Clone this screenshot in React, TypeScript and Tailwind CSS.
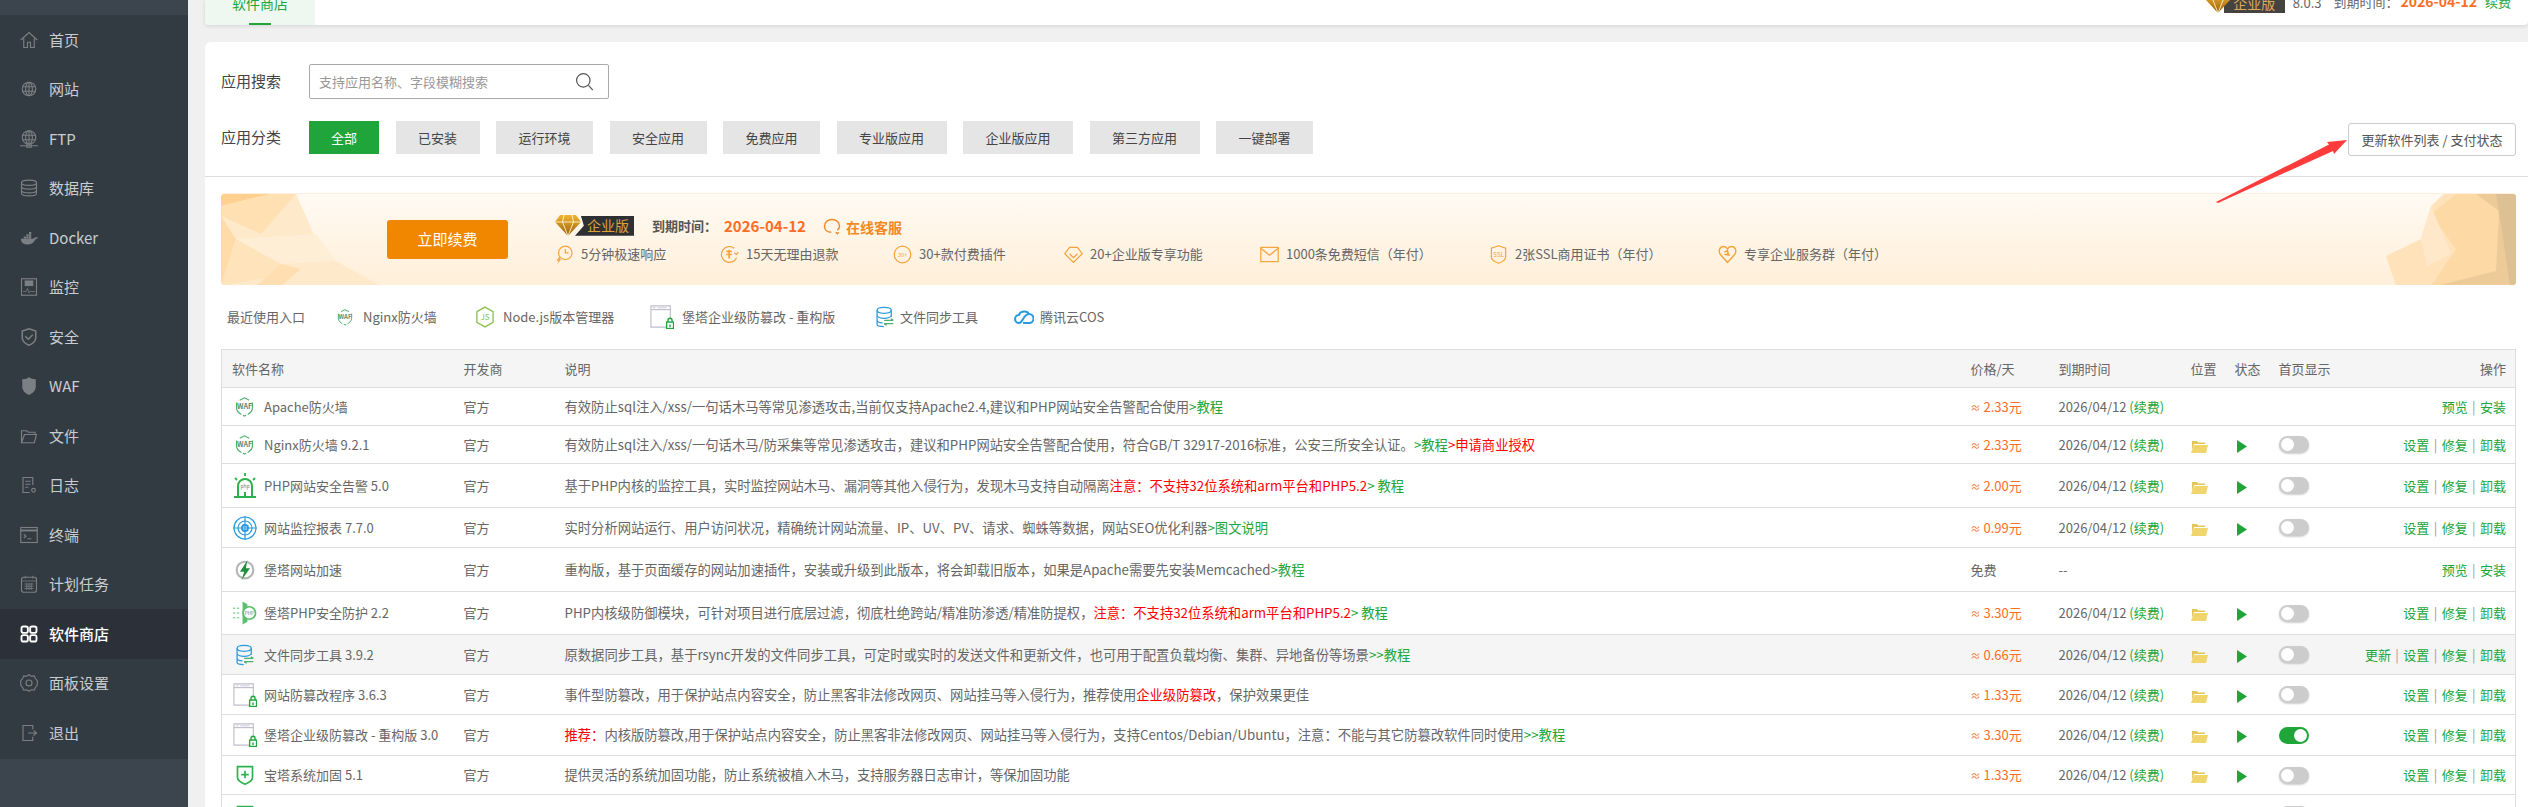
import type { ReactNode } from 'react';

const G = ({ children }: { children: ReactNode }) => <span className="text-[#20a53a]">{children}</span>;
const R = ({ children }: { children: ReactNode }) => <span className="text-[#ff0000]">{children}</span>;

function Svg({ size = 18, view = 24, children }: { size?: number; view?: number; children: ReactNode }) {
  return (
    <svg width={size} height={size} viewBox={`0 0 ${view} ${view}`} fill="none" stroke="currentColor" strokeWidth="1.5" className="shrink-0">
      {children}
    </svg>
  );
}

const Globe = () => (
  <>
    <circle cx="12" cy="10" r="9" />
    <ellipse cx="12" cy="10" rx="4.5" ry="9" />
    <path d="M3 7h18M3 13h18M12 1v18" />
  </>
);

const sideIcons: Record<string, ReactNode> = {
  home: <path d="M1 12 12 2l11 10M5 10v12h5v-7h4v7h5V10" />,
  web: (
    <g transform="translate(0 2)">
      <Globe />
    </g>
  ),
  ftp: (
    <>
      <Globe />
      <path d="M0 21h24M9 19v4h6v-4" />
    </>
  ),
  db: (
    <>
      <ellipse cx="12" cy="5" rx="10" ry="3.5" />
      <path d="M2 5v14c0 2 4.500 3.500 10 3.500s10-1.500 10-3.500V5M2 10c0 2 4.500 3.500 10 3.500s10-1.500 10-3.500M2 15c0 2 4.500 3.500 10 3.500s10-1.500 10-3.500" />
    </>
  ),
  docker: (
    <path
      fill="currentColor"
      stroke="none"
      d="M1 13h17c.6-1.500 2-2 3.500-1.700.8-.3 1.500-.3 2.500 0-.8 1.700-2 2.200-3.500 2.200C19 18 15 20.500 9 20.500 4 20.500 1.500 18 1 13zM5 10h3v2.500H5zM8.500 10h3v2.500h-3zM12 10h3v2.500h-3zM8.500 7h3v2.500h-3zM12 7h3v2.500h-3zM12 4h3v2.500h-3z"
    />
  ),
  monitor: (
    <>
      <rect x="2" y="1" width="20" height="22" />
      <rect x="7" y="4" width="10" height="6" fill="currentColor" />
      <path d="M4 18h4l2-4 2 6 2-3 1 1h5" strokeWidth="1" />
    </>
  ),
  shield: (
    <>
      <path d="M12 1 21 4v9c0 5-4 8-9 10-5-2-9-5-9-10V4z" strokeWidth="2" />
      <path d="m7 11 4 4 6-6" strokeWidth="2" />
    </>
  ),
  waf: <path fill="currentColor" stroke="none" d="M12 0c2 2 5 3 9 3v10c0 5-4 9-9 11-5-2-9-6-9-11V3c4 0 7-1 9-3z" />,
  file: <path d="M2 21V5h7l2 2h9v3M2 21h17l3-11H6L2 21z" />,
  log: (
    <>
      <path d="M17 12V2H4v20h9" />
      <path d="M7 7h7M7 11h7M7 15h4" />
      <circle cx="18" cy="19" r="2.500" />
    </>
  ),
  term: (
    <>
      <rect x="1" y="2" width="22" height="20" />
      <path d="M1 6h22" strokeWidth="2.500" />
      <path d="m5 11 3 2.500L5 16M10 17h5" />
    </>
  ),
  cron: (
    <>
      <rect x="2" y="3" width="20" height="20" rx="3" />
      <path d="M2 8h20M7 1v4M17 1v4M6 12h12M6 15h12M6 18h12M9 11v9M12 11v9M15 11v9" strokeWidth="1" />
    </>
  ),
  store: (
    <g strokeWidth="2.500">
      <rect x="2" y="2" width="8.500" height="8.500" rx="2.500" />
      <rect x="13.500" y="2" width="8.500" height="8.500" rx="2.500" />
      <rect x="2" y="13.500" width="8.500" height="8.500" rx="2.500" />
      <rect x="13.500" y="13.500" width="8.500" height="8.500" rx="2.500" />
    </g>
  ),
  gear: (
    <>
      <path d="m12 1 3 2 4-.5 1.500 3.500L23 9v6l-2.500 3-1.500 3.500-4-.5-3 2-3-2-4 .5L3.500 18 1 15V9l2.500-3L5 2.500l4 .5z" />
      <circle cx="12" cy="12" r="4" />
    </>
  ),
  exit: (
    <>
      <path d="M17 7V2H4v20h13v-5" />
      <path d="M11 12h11M18 8.500l4 3.500-4 3.500" />
    </>
  ),
};

const menu = [
  ['首页', 'home'],
  ['网站', 'web'],
  ['FTP', 'ftp'],
  ['数据库', 'db'],
  ['Docker', 'docker'],
  ['监控', 'monitor'],
  ['安全', 'shield'],
  ['WAF', 'waf'],
  ['文件', 'file'],
  ['日志', 'log'],
  ['终端', 'term'],
  ['计划任务', 'cron'],
  ['软件商店', 'store'],
  ['面板设置', 'gear'],
  ['退出', 'exit'],
];

function Sidebar() {
  return (
    <aside className="flex w-[188px] shrink-0 flex-col bg-[#3c444d]">
      <ul className="mt-[15px] bg-[#333b42] pb-[1px]">
        {menu.map(([label, key]) => (
          <li
            key={key}
            className={
              key === 'store'
                ? 'flex h-[49.500px] items-center gap-[11px] bg-[#2c3038] pl-[20px] text-[15px] font-medium text-white'
                : 'flex h-[49.500px] items-center gap-[11px] pl-[20px] text-[15px] text-[#c9cdd1]'
            }
          >
            <span className={key === 'store' ? 'text-white' : 'text-[#7b8086]'}>
              <Svg>{sideIcons[key]}</Svg>
            </span>
            {label}
          </li>
        ))}
      </ul>
    </aside>
  );
}

function Diamond({ size = 26 }: { size?: number }) {
  return (
    <svg width={size} height={(size * 21) / 26} viewBox="0 0 26 21" className="relative z-10 shrink-0">
      <defs>
        <linearGradient id="gold" x1="0" y1="0" x2="0" y2="1">
          <stop offset="0" stopColor="#f2b632" />
          <stop offset="1" stopColor="#9a5f08" />
        </linearGradient>
      </defs>
      <path d="M5 0h16l5 7-13 14L0 7z" fill="url(#gold)" />
      <path d="M0 7h26M9 0 7.500 7 13 21 18.500 7 17 0" stroke="#fff3d0" strokeWidth="0.900" fill="none" />
    </svg>
  );
}

function Badge() {
  return (
    <div className="flex items-center">
      <Diamond />
      <div className="-ml-[6px] flex h-[20px] w-[59px] items-center justify-end bg-[#2f3033] pr-[5px] text-[14px] text-[#d9a23c] [clip-path:polygon(10%_0,100%_0,100%_100%,0_100%,15%_50%)]">
        企业版
      </div>
    </div>
  );
}

const featIcons: Record<string, ReactNode> = {
  time: (
    <>
      <circle cx="13" cy="10" r="8.500" />
      <path d="M13 5v5h4" />
      <path d="M5 15 2 20h2.500L3 24l5-6H5.500L7 15z" fill="currentColor" stroke="none" />
    </>
  ),
  refund: (
    <>
      <path d="M18 4a10 10 0 1 0 3 12M23 9l-2 3-3-2" />
      <path d="M8 8h7M8 12h7M11.500 6v11" strokeWidth="2" />
    </>
  ),
  plugin: (
    <>
      <circle cx="12" cy="12" r="10.500" />
      <text x="12" y="15" fontSize="7" textAnchor="middle" fill="currentColor" stroke="none">
        30+
      </text>
    </>
  ),
  gem: <path d="M7 3h10l6 8-11 11L1 11zM7 11l5 5 5-5" />,
  mail: (
    <>
      <rect x="1" y="3" width="22" height="18" />
      <path d="m1 4 11 9 11-9" />
    </>
  ),
  ssl: (
    <>
      <path d="M12 1 21 4v11c0 4-4 6-9 8-5-2-9-4-9-8V4z" />
      <text x="12" y="15" fontSize="8" textAnchor="middle" fill="currentColor" stroke="none">
        SSL
      </text>
    </>
  ),
  heart: <path d="M12 22 3 12C0 8 2 2 7 2c2 0 4 1 5 3 1-2 3-3 5-3 5 0 7 6 4 10zM8 9l4-2 1 4-3 1 5 1" strokeWidth="1.800" />,
};

const feats = [
  ['time', '5分钟极速响应', 'w-[165px]'],
  ['refund', '15天无理由退款', 'w-[173px]'],
  ['plugin', '30+款付费插件', 'w-[171px]'],
  ['gem', '20+企业版专享功能', 'w-[196px]'],
  ['mail', '1000条免费短信（年付）', 'w-[229px]'],
  ['ssl', '2张SSL商用证书（年付）', 'w-[229px]'],
  ['heart', '专享企业服务群（年付）', 'w-[170px]'],
];

function Banner() {
  return (
    <div className="relative mt-[16px] flex h-[92px] items-center overflow-hidden rounded-[4px] border-t border-[#ffeedd] bg-gradient-to-b from-[#fffaf3] to-[#ffefd9] pl-[166px]">
      <svg className="absolute top-0 left-0" width="170" height="92" viewBox="0 0 170 92">
        <path d="M0 2 75 0l20 45 20 22 45 25H0z" fill="#ffe9cb" />
        <path d="M0 0h50L0 12z" fill="#ffd08f" />
        <path d="M0 12 50 0h25L40 40 0 22z" fill="#ffe0b3" />
        <path d="M0 22 15 45 0 92z" fill="#ffdba8" />
        <path d="M15 45 60 70 65 80 0 92z" fill="#ffe3bb" />
        <path d="M60 70 80 75 60 92H35z" fill="#ffdfb1" />
        <path d="m15 45 80-5 20 27-55 3z" fill="#ffeed6" />
      </svg>
      <svg className="absolute top-0 right-0" width="130" height="92" viewBox="0 0 130 92">
        <path d="M35 45 45 12 58 0h72v92H10L0 62z" fill="#ffe2b9" />
        <path d="M45 20 70 0h40l28 0v92H45L70 55z" fill="#fcd9a5" />
        <path d="M90 0h40v92H50l60-15 3-60z" fill="#edcb98" />
        <path d="M110 0h20v92h-6l-8-55z" fill="#dec095" />
        <path d="M35 45 45 12l20 48-24 12z" fill="#ffe8c9" />
      </svg>
      <button className="relative h-[39px] w-[121px] rounded-[3px] bg-[#f18700] text-[15px] text-white">立即续费</button>
      <div className="relative ml-[47px] flex flex-col gap-[8px]">
        <div className="flex h-[21px] items-center">
          <Badge />
          <span className="ml-[18px] text-[13px] font-bold text-[#555]">到期时间：</span>
          <span className="ml-[7px] text-[15px] font-bold text-[#fc6d26]">2026-04-12</span>
          <span className="mt-[3px] ml-[17px] flex items-center gap-[5px] text-[14px] font-bold text-[#f08a24]">
            <Svg size={18}>
              <path d="M12 2C6 2 2 6 2 11s4 8 9 8M12 2c6 0 10 4 10 9 0 2-1 4-3 5M17 19l2 2 2-2" strokeWidth="2" />
            </Svg>
            在线客服
          </span>
        </div>
        <div className="flex items-center text-[13px] text-[#666]">
          {feats.map(([key, text, w]) => (
            <span key={key} className={`flex items-center gap-[7px] whitespace-nowrap ${w}`}>
              <span className="text-[#f5a33a]">
                <Svg size={19}>{featIcons[key]}</Svg>
              </span>
              {text}
            </span>
          ))}
        </div>
      </div>
    </div>
  );
}

function WafIcon({ w = 19, h = 21 }: { w?: number; h?: number }) {
  return (
    <svg width={w} height={h} viewBox="0 0 24 26" fill="none" stroke="#4caf6e" strokeWidth="1.500" className="shrink-0">
      <path d="M6 5 12 2l6 3M22 8v7c0 4-4 7-6 8M2 8v7c0 4 4 7 6 8M10 24l2 1 2-1" />
      <text x="12" y="16" fontSize="9" fontWeight="700" textAnchor="middle" fill="#5d8c6e" stroke="none">
        WAF
      </text>
    </svg>
  );
}

function WindowLock({ size = 24 }: { size?: number }) {
  return (
    <svg width={size} height={size} viewBox="0 0 26 26" fill="none" className="shrink-0">
      <path d="M18 24H1V1h21v15" stroke="#bdbdca" strokeWidth="1.200" />
      <path d="M1 5h21" stroke="#bdbdca" strokeWidth="1.200" />
      <path d="M3 3h3M8 3h10" stroke="#c9c9d2" />
      <rect x="18" y="18.500" width="7.500" height="7" fill="none" stroke="#20a53a" strokeWidth="1.500" />
      <path d="M19.500 18.500v-2a2.200 2.200 0 0 1 4.400 0v2M21.700 21v3" stroke="#20a53a" strokeWidth="1.500" />
    </svg>
  );
}

const SyncIcon = () => (
  <svg width="20" height="22" viewBox="0 0 24 26" fill="none" stroke="#2a9be0" strokeWidth="1.500" className="shrink-0">
    <ellipse cx="11" cy="5" rx="8.500" ry="3.500" />
    <path d="M2.500 5v17c0 1.500 4 2.500 8 2.500M19.500 5v8M2.500 11c0 2 4 3.500 8.500 3.500s8.500-1.500 8.500-3.500M2.500 17c0 2 3 3 6.500 3" />
    <path d="M11 17h11M19 15l3 2M22 21H11M14 23l-3-2" stroke="#4caf6e" />
  </svg>
);

const rowIcons: Record<string, ReactNode> = {
  waf: <WafIcon />,
  alert: (
    <svg width="24" height="26" viewBox="0 0 24 26" fill="none" stroke="#2bb24c" strokeWidth="1.800" className="shrink-0">
      <path d="M5 23V13a7 7 0 0 1 14 0v10M1 24h22M12 23v-4" strokeWidth="2" />
      <path d="M12 0v3M2 5l2 2M22 5l-2 2" />
      <text x="12" y="15" fontSize="5" textAnchor="middle" fill="#777" stroke="none">
        php
      </text>
    </svg>
  ),
  target: (
    <svg width="24" height="26" viewBox="0 0 24 26" fill="none" stroke="#2a9be0" strokeWidth="1.200" className="shrink-0">
      <circle cx="12" cy="13" r="11" />
      <circle cx="12" cy="13" r="7" />
      <circle cx="12" cy="13" r="3" strokeWidth="2" />
      <path d="M12 1v24M0 13h24" />
    </svg>
  ),
  speed: (
    <svg width="20" height="22" viewBox="0 0 24 26" fill="none" className="shrink-0">
      <circle cx="12" cy="13" r="10" stroke="#b5b5b5" strokeWidth="2.500" />
      <path d="M15 1 6 15h5l-3 10 10-14h-5z" fill="#1f8f3a" />
    </svg>
  ),
  guard: (
    <svg width="25" height="26" viewBox="0 0 26 26" fill="none" className="shrink-0">
      <path d="M11 1l5 3v18l-5 3z" fill="#5cbf6c" />
      <circle cx="18" cy="13" r="6.500" fill="#fff" stroke="#5cbf6c" strokeWidth="1.800" />
      <text x="18" y="15" fontSize="5" textAnchor="middle" fill="#777">
        PHP
      </text>
      <path d="M1 8h7M1 13h7M1 18h7" stroke="#5cbf6c" strokeDasharray="2.500 1.500" />
    </svg>
  ),
  sync: <SyncIcon />,
  lock: <WindowLock />,
  plus: (
    <svg width="20" height="22" viewBox="0 0 24 26" fill="none" stroke="#2bb24c" strokeWidth="2" className="shrink-0">
      <path d="M3 3 12 3h9v13c0 4-4 6-9 8-5-2-9-4-9-8z" />
      <path d="M12 8v9M7.500 12.500h9" />
    </svg>
  ),
};

const ex = (
  <>
    2026/04/12 <G>(续费)</G>
  </>
);

type Row = {
  h: string;
  icon: string;
  name: string;
  desc: ReactNode;
  price?: string;
  on?: boolean;
  installed?: boolean;
  update?: boolean;
  hover?: boolean;
};

const rows: Row[] = [
  {
    h: 'h-[38px]',
    icon: 'waf',
    name: 'Apache防火墙',
    price: '2.33',
    desc: (
      <>
        有效防止sql注入/xss/一句话木马等常见渗透攻击,当前仅支持Apache2.4,建议和PHP网站安全告警配合使用<G>&gt;教程</G>
      </>
    ),
  },
  {
    h: 'h-[38px]',
    icon: 'waf',
    name: 'Nginx防火墙 9.2.1',
    price: '2.33',
    installed: true,
    desc: (
      <>
        有效防止sql注入/xss/一句话木马/防采集等常见渗透攻击，建议和PHP网站安全告警配合使用，符合GB/T 32917-2016标准，公安三所安全认证。<G>&gt;教程</G>
        <R>&gt;申请商业授权</R>
      </>
    ),
  },
  {
    h: 'h-[44px]',
    icon: 'alert',
    name: 'PHP网站安全告警 5.0',
    price: '2.00',
    installed: true,
    desc: (
      <>
        基于PHP内核的监控工具，实时监控网站木马、漏洞等其他入侵行为，发现木马支持自动隔离<R>注意：不支持32位系统和arm平台和PHP5.2</R>
        <G>&gt; 教程</G>
      </>
    ),
  },
  {
    h: 'h-[40px]',
    icon: 'target',
    name: '网站监控报表 7.7.0',
    price: '0.99',
    installed: true,
    desc: (
      <>
        实时分析网站运行、用户访问状况，精确统计网站流量、IP、UV、PV、请求、蜘蛛等数据，网站SEO优化利器<G>&gt;图文说明</G>
      </>
    ),
  },
  {
    h: 'h-[44px]',
    icon: 'speed',
    name: '堡塔网站加速',
    desc: (
      <>
        重构版，基于页面缓存的网站加速插件，安装或升级到此版本，将会卸载旧版本，如果是Apache需要先安装Memcached<G>&gt;教程</G>
      </>
    ),
  },
  {
    h: 'h-[43px]',
    icon: 'guard',
    name: '堡塔PHP安全防护 2.2',
    price: '3.30',
    installed: true,
    desc: (
      <>
        PHP内核级防御模块，可针对项目进行底层过滤，彻底杜绝跨站/精准防渗透/精准防提权，<R>注意：不支持32位系统和arm平台和PHP5.2</R>
        <G>&gt; 教程</G>
      </>
    ),
  },
  {
    h: 'h-[40px]',
    icon: 'sync',
    name: '文件同步工具 3.9.2',
    price: '0.66',
    installed: true,
    update: true,
    hover: true,
    desc: (
      <>
        原数据同步工具，基于rsync开发的文件同步工具，可定时或实时的发送文件和更新文件，也可用于配置负载均衡、集群、异地备份等场景<G>&gt;&gt;教程</G>
      </>
    ),
  },
  {
    h: 'h-[40px]',
    icon: 'lock',
    name: '网站防篡改程序 3.6.3',
    price: '1.33',
    installed: true,
    desc: (
      <>
        事件型防篡改，用于保护站点内容安全，防止黑客非法修改网页、网站挂马等入侵行为，推荐使用<R>企业级防篡改</R>，保护效果更佳
      </>
    ),
  },
  {
    h: 'h-[41px]',
    icon: 'lock',
    name: '堡塔企业级防篡改 - 重构版 3.0',
    price: '3.30',
    installed: true,
    on: true,
    desc: (
      <>
        <R>推荐：</R>内核版防篡改,用于保护站点内容安全，防止黑客非法修改网页、网站挂马等入侵行为，支持Centos/Debian/Ubuntu，注意：不能与其它防篡改软件同时使用<G>&gt;&gt;教程</G>
      </>
    ),
  },
  {
    h: 'h-[39px]',
    icon: 'plus',
    name: '宝塔系统加固 5.1',
    price: '1.33',
    installed: true,
    desc: '提供灵活的系统加固功能，防止系统被植入木马，支持服务器日志审计，等保加固功能',
  },
];

function Toggle({ on }: { on?: boolean }) {
  return (
    <div
      className={
        on
          ? 'flex h-[17px] w-[30px] items-center justify-end rounded-full bg-[#20a53a] p-[2px]'
          : 'flex h-[17px] w-[30px] items-center justify-start rounded-full bg-[#cccccc] p-[2px] shadow-[0_1px_2px_rgba(0,0,0,0.2)]'
      }
    >
      <span className="h-[13px] w-[13px] rounded-full bg-white" />
    </div>
  );
}

const Sep = () => <span className="mx-[1.500px] text-[#999]"> | </span>;

function Ops({ row }: { row: Row }) {
  if (!row.installed)
    return (
      <G>
        预览<Sep />安装
      </G>
    );
  return (
    <G>
      {row.update && (
        <>
          更新<Sep />
        </>
      )}
      设置<Sep />修复<Sep />卸载
    </G>
  );
}

const Folder = () => (
  <svg width="17" height="13" viewBox="0 0 17 13" className="mt-[3px]">
    <path d="M1 1h5l1 1.500h7V4H3L1 10z" fill="#e3c65a" />
    <path d="M3 5h14l-2 8H0z" fill="#f0d56d" />
  </svg>
);

const Play = () => (
  <svg width="10" height="13" viewBox="0 0 10 13" className="mt-[3px] ml-[2px]">
    <path d="M0 0l10 6.500L0 13z" fill="#20a53a" />
  </svg>
);

function Table() {
  return (
    <table className="w-full table-fixed border-collapse border border-[#dddddd] text-[13px] text-[#666]">
      <colgroup>
        <col className="w-[232px]" />
        <col className="w-[101px]" />
        <col />
        <col className="w-[88px]" />
        <col className="w-[132px]" />
        <col className="w-[44px]" />
        <col className="w-[44px]" />
        <col className="w-[80px]" />
        <col className="w-[167px]" />
      </colgroup>
      <thead>
        <tr className="h-[38px] bg-[#f5f5f5] text-left whitespace-nowrap">
          <th className="px-[10px] font-normal">软件名称</th>
          <th className="px-[10px] font-normal">开发商</th>
          <th className="px-[10px] font-normal">说明</th>
          <th className="px-[10px] font-normal">价格/天</th>
          <th className="px-[10px] font-normal">到期时间</th>
          <th className="pl-[10px] font-normal">位置</th>
          <th className="pl-[10px] font-normal">状态</th>
          <th className="px-[10px] font-normal">首页显示</th>
          <th className="px-[9px] text-right font-normal">操作</th>
        </tr>
      </thead>
      <tbody>
        {rows.map((r) => (
          <tr key={r.name} className={`${r.h} border-t border-[#dddddd] ${r.hover ? 'bg-[#f5f5f5]' : ''}`}>
            <td className="px-[10px]">
              <div className="flex items-center gap-[7px] whitespace-nowrap">
                <span className="flex w-[25px] shrink-0 justify-center">{rowIcons[r.icon]}</span>
                {r.name}
              </div>
            </td>
            <td className="px-[10px]">官方</td>
            <td className="overflow-hidden px-[10px] text-[13.300px] whitespace-nowrap">{r.desc}</td>
            <td className="px-[10px] whitespace-nowrap">
              {r.price ? (
                <span className="text-[#fc6d26]">
                  <span className="inline-block w-[13px] text-[10px]">≈</span>
                  {r.price}元
                </span>
              ) : (
                '免费'
              )}
            </td>
            <td className="px-[10px] whitespace-nowrap">{r.price ? ex : '--'}</td>
            <td className="px-[10px]">{r.installed && <Folder />}</td>
            <td className="px-[10px]">{r.installed && <Play />}</td>
            <td className="px-[10px]">{r.installed && <Toggle on={r.on} />}</td>
            <td className="px-[9px] text-right whitespace-nowrap">
              <Ops row={r} />
            </td>
          </tr>
        ))}
        <tr className="h-[40px] border-t border-[#dddddd] align-top">
          <td className="px-[10px] pt-[9px]">
            <span className="flex w-[25px] justify-center">{rowIcons.plus}</span>
          </td>
          <td colSpan={6} />
          <td className="px-[10px] pt-[11px]">
            <Toggle />
          </td>
          <td />
        </tr>
      </tbody>
    </table>
  );
}

const cats = ['已安装', '运行环境', '安全应用', '免费应用', '专业版应用', '企业版应用', '第三方应用', '一键部署'];

const recent: [ReactNode, string, string][] = [
  [<WafIcon key="w" w={16} h={20} />, 'Nginx防火墙', 'w-[139px] gap-[10px]'],
  [
    <svg key="j" width="18" height="22" viewBox="0 0 20 24" fill="none" stroke="#8cc152" strokeWidth="1.500" className="shrink-0">
      <path d="m10 1 9 5v12l-9 5-9-5V6z" />
      <text x="10" y="15.500" fontSize="9" textAnchor="middle" fill="#8cc152" stroke="none">
        JS
      </text>
    </svg>,
    'Node.js版本管理器',
    'w-[174px] gap-[9px]',
  ],
  [<WindowLock key="l" />, '堡塔企业级防篡改 - 重构版', 'w-[225px] gap-[8px]'],
  [<SyncIcon key="s" />, '文件同步工具', 'w-[139px] gap-[5px]'],
  [
    <svg key="c" width="20" height="16" viewBox="0 0 20 16" fill="none" stroke="#2a9be0" strokeWidth="2" className="shrink-0">
      <path d="M5 14a4 4 0 0 1 0-8c1-4 8-5 10-1M9 14h6a4 4 0 0 0 0-9c-3 0-4 2-6 5-1 2-2 4-4 4" />
    </svg>,
    '腾讯云COS',
    'gap-[6px]',
  ],
];

export default function App() {
  return (
    <div className="relative flex h-[807px] overflow-hidden bg-[#f0f0f0] font-['Noto_Sans_CJK_SC',sans-serif] text-[13px] text-[#555]">
      <Sidebar />
      <main className="ml-[17px] flex min-w-0 flex-1 flex-col">
        <header className="flex h-[25px] shrink-0 items-end justify-between overflow-hidden rounded-b-[4px] bg-white shadow-[0_1px_4px_rgba(0,0,0,0.12)]">
          <div className="relative flex h-full w-[110px] items-end justify-center bg-[#eef8f0] pb-[12px]">
            <span className="text-[14px] leading-[20px] whitespace-nowrap text-[#20a53a]">软件商店</span>
            <span className="absolute bottom-0 left-[44px] h-[2px] w-[22px] bg-[#20a53a]" />
          </div>
          <div className="flex items-end pr-[17px] pb-[13px] whitespace-nowrap">
            <div className="-mb-[1px] mr-[8px] flex items-end">
              <Diamond />
              <div className="-ml-[7px] flex h-[20px] w-[61px] items-center justify-center bg-[#45433f] text-[14px] text-[#d9a95c]">企业版</div>
            </div>
            <span className="mr-[12px] text-[#666]">8.0.3</span>
            <span className="flex items-center text-[#666]">
              到期时间：<span className="ml-[2px] text-[14px] font-bold text-[#fc6d26]">2026-04-12</span>
              <span className="ml-[8px] text-[#20a53a]">续费</span>
            </span>
          </div>
        </header>
        <section className="mt-[17px] flex-1 rounded-tl-[6px] bg-white">
          <div className="border-b border-[#dddddd] pt-[22px] pr-[12px] pb-[22px] pl-[16px]">
            <div className="flex h-[35px] items-center">
              <span className="w-[88px] text-[15px] text-[#444]">应用搜索</span>
              <div className="flex h-[35px] w-[300px] items-center justify-between rounded-[2px] border border-[#aaaaaa] pr-[14px] pl-[9px] text-[13px] text-[#999]">
                支持应用名称、字段模糊搜索
                <span className="text-[#555]">
                  <Svg size={19}>
                    <circle cx="10.500" cy="10.500" r="8.500" />
                    <path d="m17 17 5.500 6" />
                  </Svg>
                </span>
              </div>
            </div>
            <div className="mt-[22px] flex h-[33px] items-start">
              <span className="flex h-[33px] w-[88px] items-center text-[15px] text-[#444]">应用分类</span>
              <div className="flex gap-[16.500px]">
                <button className="h-[33px] w-[70px] bg-[#20a53a] text-white">全部</button>
                {cats.map((c) => (
                  <button key={c} className="h-[33px] bg-[#e5e5e5] px-[22.500px] text-[#444]">
                    {c}
                  </button>
                ))}
              </div>
              <button className="mt-[2px] ml-auto h-[33px] w-[168px] rounded-[3px] border border-[#cccccc] bg-white text-[#555]">
                更新软件列表 / 支付状态
              </button>
            </div>
          </div>
          <div className="pr-[12px] pl-[16px]">
            <Banner />
            <div className="flex h-[64px] items-center pl-[6px] text-[#666]">
              <span className="w-[110px]">最近使用入口</span>
              {recent.map(([icon, text, cls]) => (
                <span key={text} className={`flex items-center whitespace-nowrap ${cls}`}>
                  {icon}
                  {text}
                </span>
              ))}
            </div>
            <Table />
          </div>
        </section>
      </main>
      {/* 截图上的红色标注箭头 */}
      <svg className="absolute top-0 left-0" width="2528" height="807" pointerEvents="none">
        <path d="M2216 202 2329 144.500 2327 142 2347 140 2334 154 2333 151 2218 203z" fill="#ff3b3b" />
      </svg>
    </div>
  );
}
